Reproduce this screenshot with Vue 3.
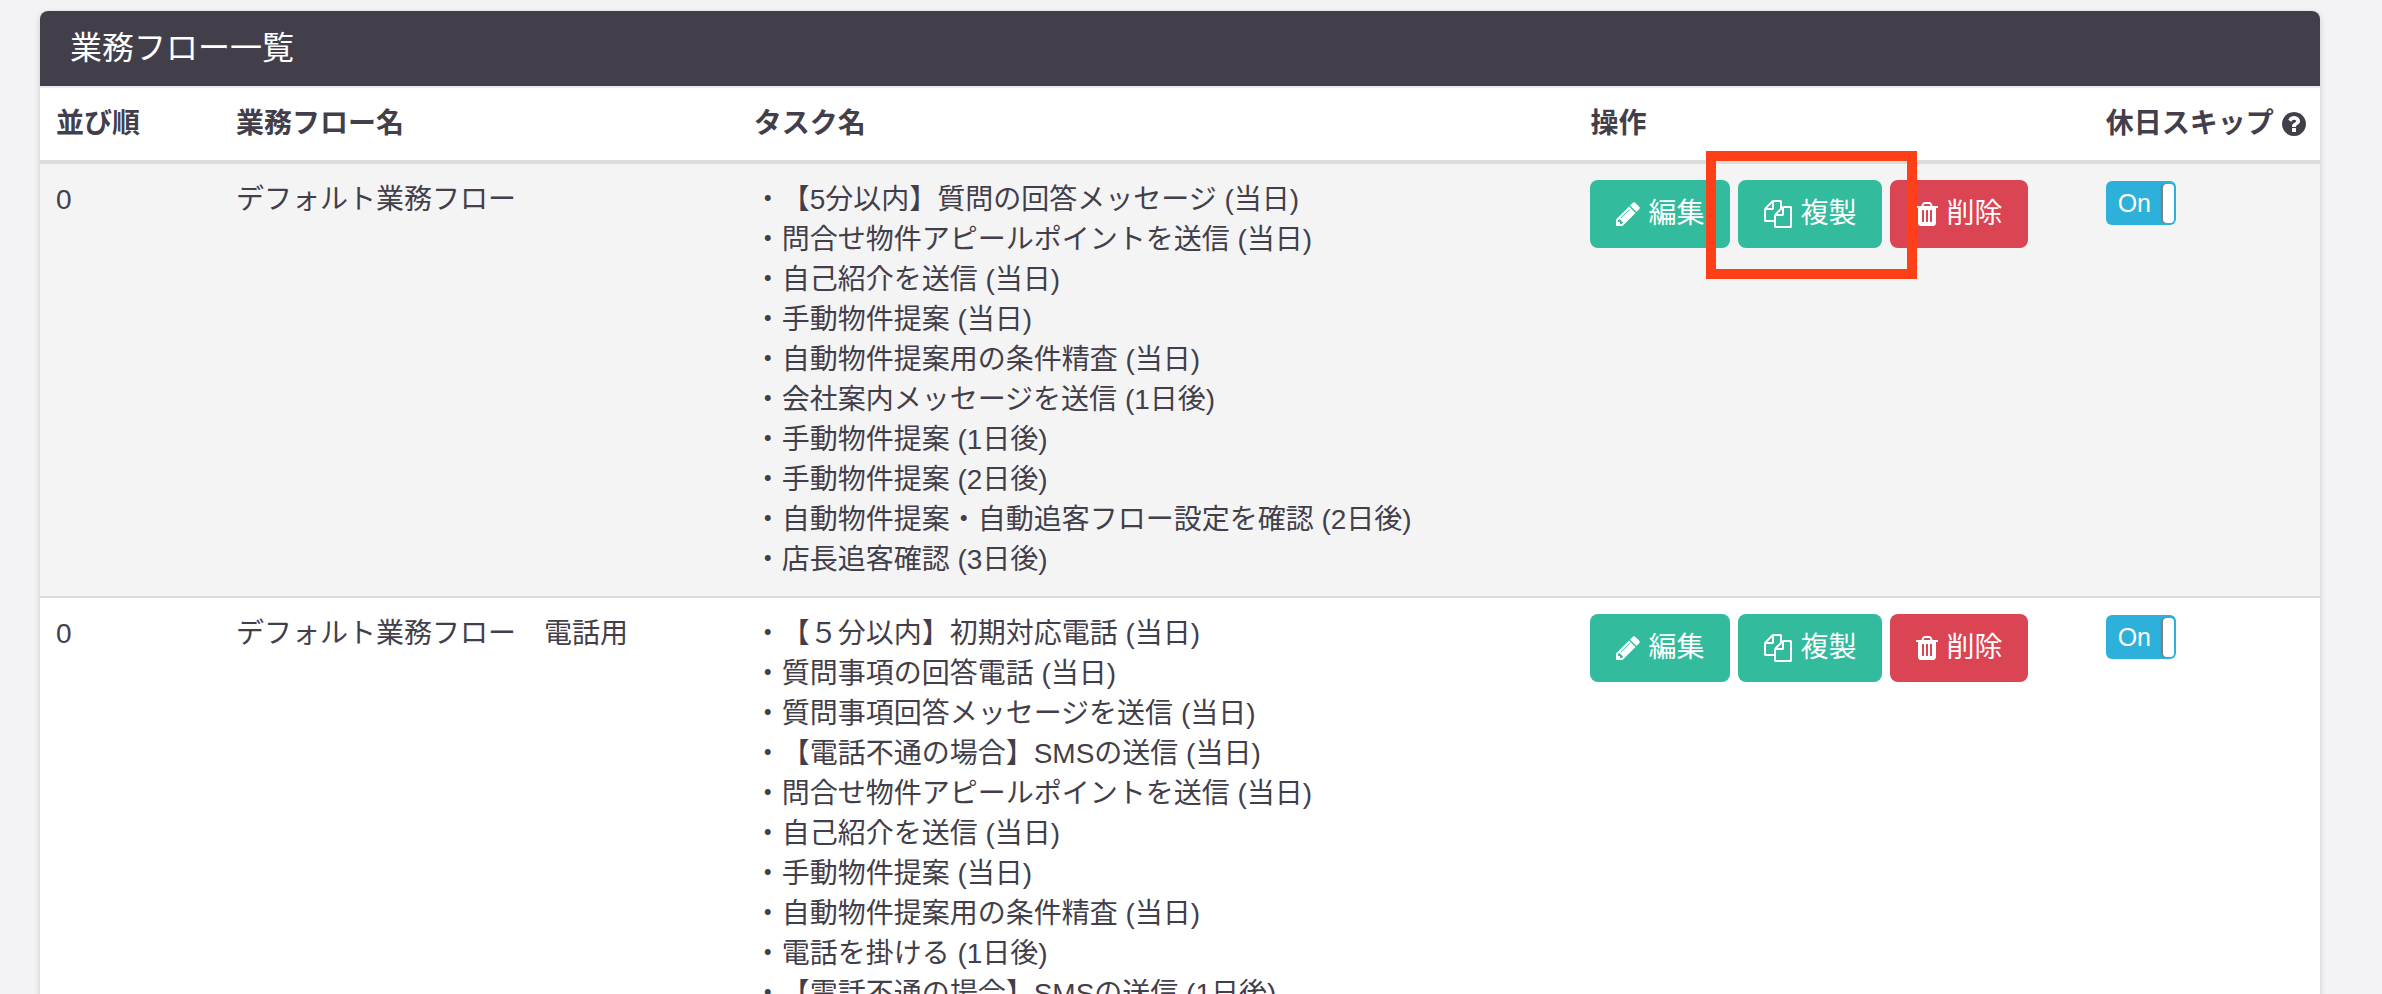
<script setup>
import { reactive } from 'vue'

const icons = {
  pencil: {
    width: 24,
    box: '128 0 1536 1792',
    d: 'M491 1536l91-91-235-235-91 91v107h128v128h107zm523-928q0-22-22-22-10 0-17 7l-542 542q-7 7-7 17 0 22 22 22 10 0 17-7l542-542q7-7 7-17zm-54-192l416 416-832 832h-416v-416zm683 96q0 53-37 90l-166 166-416-416 166-165q36-38 90-38 53 0 91 38l235 234q37 39 37 91z',
  },
  copy: {
    width: 28,
    box: '0 0 1792 1792',
    d: 'M1696 384q40 0 68 28t28 68v1216q0 40-28 68t-68 28h-960q-40 0-68-28t-28-68v-288h-544q-40 0-68-28t-28-68v-672q0-40 20-88t48-76l408-408q28-28 76-48t88-20h416q40 0 68 28t28 68v328q68-40 128-40h416zm-544 213l-299 299h299v-299zm-640-384l-299 299h299v-299zm196 647l316-316v-416h-384v416q0 40-28 68t-68 28h-416v640h512v-256q0-40 20-88t48-76zm956 804v-1152h-384v416q0 40-28 68t-68 28h-416v640h896z',
  },
  trash: {
    width: 22,
    box: '192 0 1408 1792',
    d: 'M704 1376v-704q0-14-9-23t-23-9h-64q-14 0-23 9t-9 23v704q0 14 9 23t23 9h64q14 0 23-9t9-23zm256 0v-704q0-14-9-23t-23-9h-64q-14 0-23 9t-9 23v704q0 14 9 23t23 9h64q14 0 23-9t9-23zm256 0v-704q0-14-9-23t-23-9h-64q-14 0-23 9t-9 23v704q0 14 9 23t23 9h64q14 0 23-9t9-23zm-544-992h448l-48-117q-7-9-17-11h-317q-10 2-17 11zm928 32v64q0 14-9 23t-23 9h-96v948q0 83-47 143.5t-113 60.5h-832q-66 0-113-58.5t-47-141.5v-952h-96q-14 0-23-9t-9-23v-64q0-14 9-23t23-9h309l70-167q15-37 54-63t79-26h320q40 0 79 26t54 63l70 167h309q14 0 23 9t9 23z',
  },
}

const actions = [
  { key: 'edit', label: '編集', icon: icons.pencil, tone: 'primary' },
  { key: 'copy', label: '複製', icon: icons.copy, tone: 'primary' },
  { key: 'delete', label: '削除', icon: icons.trash, tone: 'danger' },
]

const flows = reactive([
  {
    order: 0,
    name: 'デフォルト業務フロー',
    skip: true,
    marked: 'copy',
    tasks: [
      '【5分以内】質問の回答メッセージ (当日)',
      '問合せ物件アピールポイントを送信 (当日)',
      '自己紹介を送信 (当日)',
      '手動物件提案 (当日)',
      '自動物件提案用の条件精査 (当日)',
      '会社案内メッセージを送信 (1日後)',
      '手動物件提案 (1日後)',
      '手動物件提案 (2日後)',
      '自動物件提案・自動追客フロー設定を確認 (2日後)',
      '店長追客確認 (3日後)',
    ],
  },
  {
    order: 0,
    name: 'デフォルト業務フロー　電話用',
    skip: true,
    marked: null,
    tasks: [
      '【５分以内】初期対応電話 (当日)',
      '質問事項の回答電話 (当日)',
      '質問事項回答メッセージを送信 (当日)',
      '【電話不通の場合】SMSの送信 (当日)',
      '問合せ物件アピールポイントを送信 (当日)',
      '自己紹介を送信 (当日)',
      '手動物件提案 (当日)',
      '自動物件提案用の条件精査 (当日)',
      '電話を掛ける (1日後)',
      '【電話不通の場合】SMSの送信 (1日後)',
    ],
  },
])
</script>

<template>
  <main class="page">
    <section class="panel">
      <h1 class="panel-title">業務フロー一覧</h1>
      <table class="flows">
        <colgroup>
          <col class="col-order" />
          <col class="col-name" />
          <col class="col-tasks" />
          <col class="col-actions" />
          <col />
        </colgroup>
        <thead>
          <tr>
            <th scope="col">並び順</th>
            <th scope="col">業務フロー名</th>
            <th scope="col">タスク名</th>
            <th scope="col">操作</th>
            <th scope="col">
              <span class="with-help">
                休日スキップ
                <svg class="icon" width="24" height="28" viewBox="128 0 1536 1792" aria-hidden="true">
                  <path d="M1024 1376v-192q0-14-9-23t-23-9h-192q-14 0-23 9t-9 23v192q0 14 9 23t23 9h192q14 0 23-9t9-23zm256-672q0-88-55.5-163t-138.5-116-170-41q-243 0-371 213-15 24 8 42l132 100q7 6 19 6 16 0 25-12 53-68 86-92 34-24 86-24 48 0 85.5 26t37.5 59q0 38-20 61t-68 45q-63 28-115.5 86.5t-52.5 125.5v36q0 14 9 23t23 9h192q14 0 23-9t9-23q0-19 21.5-49.5t54.5-49.5q32-18 49-28.5t46-35 44.5-48 28-60.5 12.5-81zm384 192q0 209-103 385.5t-279.5 279.5-385.5 103-385.5-103-279.5-279.5-103-385.5 103-385.5 279.5-279.5 385.5-103 385.5 103 279.5 279.5 103 385.5z" />
                </svg>
              </span>
            </th>
          </tr>
        </thead>
        <tbody>
          <tr v-for="flow in flows" :key="flow.name">
            <td>{{ flow.order }}</td>
            <td>{{ flow.name }}</td>
            <td>
              <ul class="tasks">
                <li v-for="task in flow.tasks" :key="task">・{{ task }}</li>
              </ul>
            </td>
            <td>
              <div class="actions">
                <div v-for="action in actions" :key="action.key" class="action">
                  <button type="button" class="btn" :class="action.tone">
                    <svg class="icon" :width="action.icon.width" height="28" :viewBox="action.icon.box" aria-hidden="true">
                      <path :d="action.icon.d" />
                    </svg>
                    {{ action.label }}
                  </button>
                  <span v-if="flow.marked === action.key" class="marker"></span>
                </div>
              </div>
            </td>
            <td>
              <label class="toggle">
                <input v-model="flow.skip" type="checkbox" class="toggle-input" />
                <span class="toggle-text">{{ flow.skip ? 'On' : 'Off' }}</span>
                <span class="toggle-knob"></span>
              </label>
            </td>
          </tr>
        </tbody>
      </table>
    </section>
  </main>
</template>

<style>
body {
  margin: 0;
  background: #f3f3f6;
}
</style>

<style scoped>
.page {
  padding: 11px 62px 40px 40px;
  color: #433f4a;
  font-family: "Liberation Sans", "Noto Sans CJK JP", sans-serif;
  font-size: 28px;
  line-height: 40px;
  text-spacing-trim: space-all;
}

.panel {
  background: #fff;
  border-radius: 8px;
  box-shadow: 0 2px 6px rgba(0, 0, 0, 0.16);
}

.panel-title {
  margin: 0;
  padding: 17px 30px 18px;
  border-bottom: 2px solid #ebeaee;
  border-radius: 8px 8px 0 0;
  background: #433f4a;
  background-clip: padding-box;
  color: #fff;
  font-size: 32px;
  font-weight: 400;
  line-height: 40px;
}

.flows {
  width: 100%;
  table-layout: fixed;
  border-collapse: separate;
  border-spacing: 0;
}

.col-order {
  width: 7.9%;
}

.col-name {
  width: 22.7%;
}

.col-tasks {
  width: 36.7%;
}

.col-actions {
  width: 22.6%;
}

th,
td {
  padding: 16px;
  text-align: left;
  vertical-align: top;
  white-space: nowrap;
}

th {
  border-bottom: 4px solid #dcdcdc;
  font-weight: 700;
}

tbody tr:nth-child(odd) {
  background: #f4f4f4;
}

tbody tr + tr td {
  border-top: 2px solid #dcdcdc;
}

.icon {
  flex: none;
  fill: currentColor;
}

.with-help {
  display: flex;
  align-items: center;
  gap: 8px;
}

.tasks {
  margin: 0;
  padding: 0;
  list-style: none;
}

.actions {
  display: flex;
  gap: 8px;
}

.action {
  position: relative;
}

.btn {
  display: flex;
  align-items: center;
  gap: 8px;
  padding: 14px 26px;
  border: 0;
  border-radius: 8px;
  color: #fff;
  font: inherit;
  cursor: pointer;
}

.primary {
  background: #32bb9d;
}

.danger {
  background: #db4453;
}

.marker {
  position: absolute;
  inset: -29px -35px -31px -32px;
  z-index: 1;
  border: 10px solid #ff3f17;
  pointer-events: none;
}

.toggle {
  position: relative;
  display: flex;
  align-items: center;
  justify-content: space-between;
  box-sizing: border-box;
  width: 70px;
  height: 44px;
  margin-top: 1px;
  padding: 0 2px 0 12px;
  border-radius: 6px;
  background: #2db0da;
  color: #fff;
  font-size: 25px;
  cursor: pointer;
}

.toggle-input {
  position: absolute;
  inset: 0;
  width: 100%;
  height: 100%;
  margin: 0;
  opacity: 0;
}

.toggle-knob {
  width: 11px;
  height: 39px;
  border-radius: 4px;
  background: #fff;
  box-shadow: -2px 0 1px #7d7f88;
}
</style>
